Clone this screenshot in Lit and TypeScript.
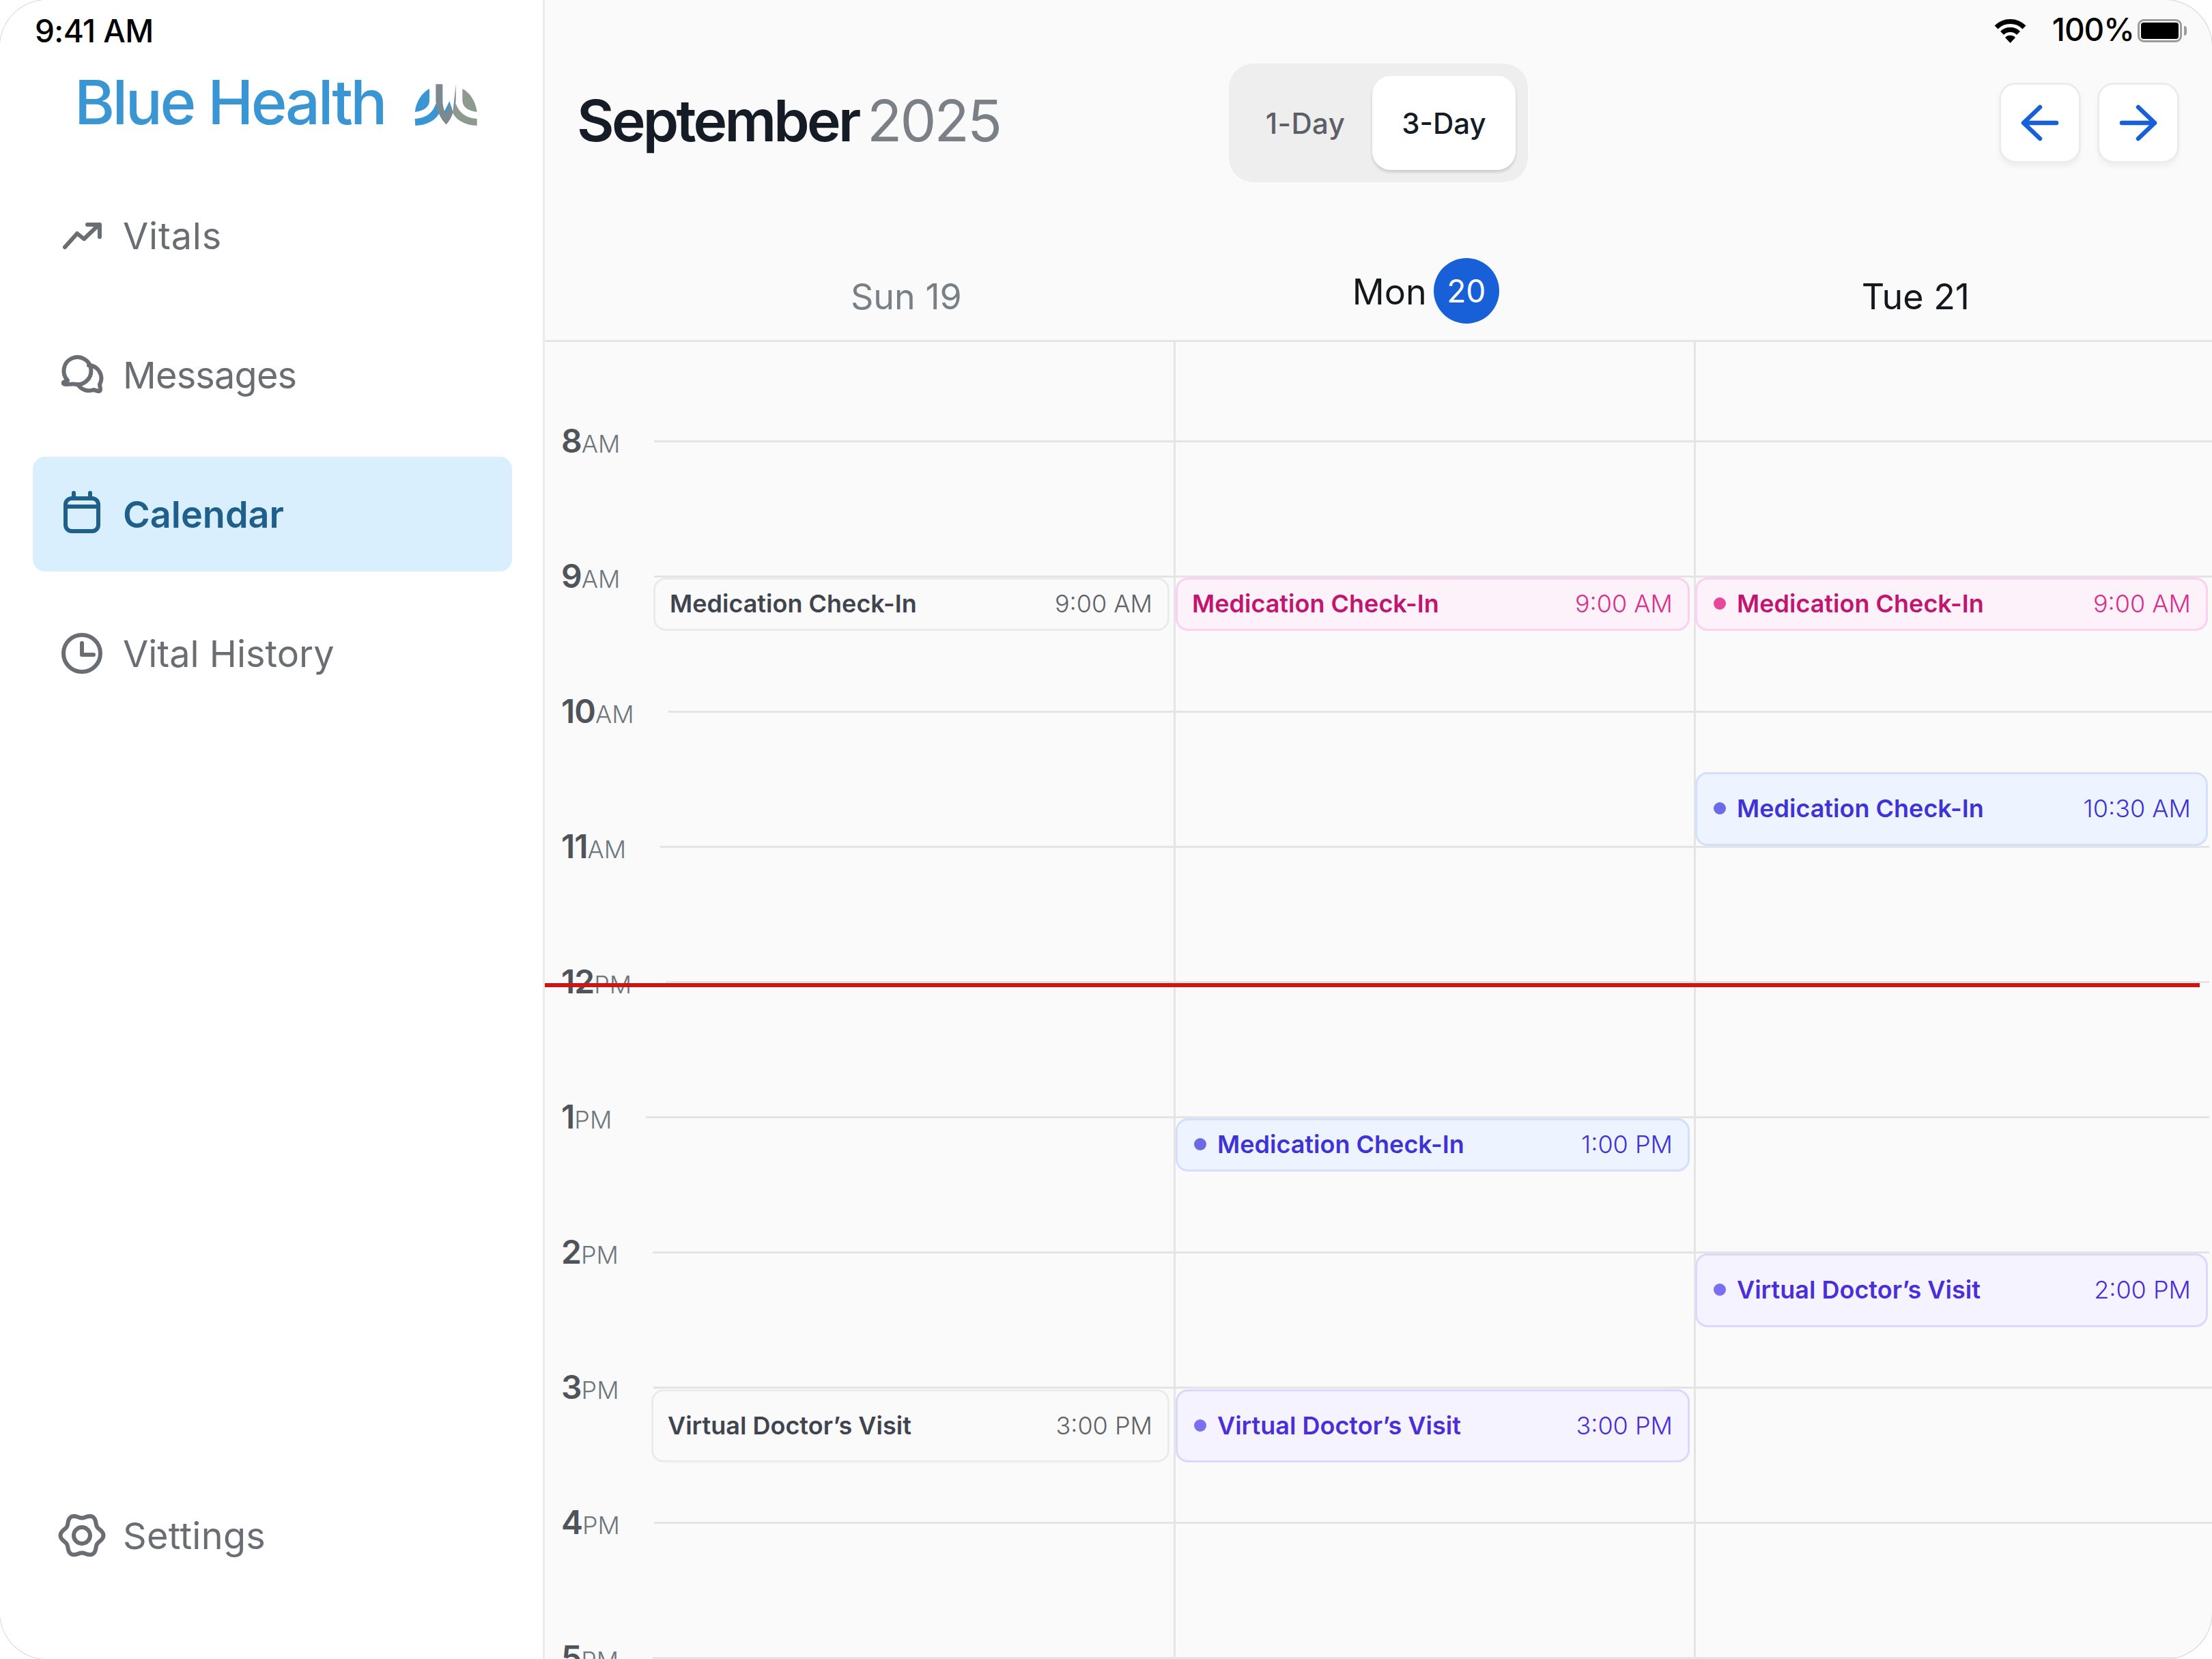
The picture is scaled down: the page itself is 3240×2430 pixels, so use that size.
import { LitElement, html, css, svg } from "lit";
import { customElement } from "lit/decorators.js";

const BODY_TOP = 501;
const BODY_LEFT = 798;

function gearPath(cx: number, cy: number, R: number, a: number): string {
  const pts: string[] = [];
  const n = 96;
  for (let i = 0; i < n; i++) {
    const t = (i / n) * Math.PI * 2;
    const r = R + a * Math.cos(6 * t);
    pts.push(`${(cx + r * Math.cos(t)).toFixed(2)} ${(cy + r * Math.sin(t)).toFixed(2)}`);
  }
  return "M" + pts.join("L") + "Z";
}

type Tone = "plain" | "pink" | "blue" | "violet";
interface Ev { x0: number; x1: number; y0: number; y1: number; tone: Tone; dot: boolean; title: string; time: string; }

const EVENTS: Ev[] = [
  { x0: 957, x1: 1713, y0: 846, y1: 924, tone: "plain", dot: false, title: "Medication Check-In", time: "9:00 AM" },
  { x0: 1722, x1: 2475, y0: 846, y1: 924, tone: "pink", dot: false, title: "Medication Check-In", time: "9:00 AM" },
  { x0: 2483, x1: 3234, y0: 846, y1: 924, tone: "pink", dot: true, title: "Medication Check-In", time: "9:00 AM" },
  { x0: 2483, x1: 3234, y0: 1131, y1: 1239, tone: "blue", dot: true, title: "Medication Check-In", time: "10:30 AM" },
  { x0: 1722, x1: 2475, y0: 1638, y1: 1716, tone: "blue", dot: true, title: "Medication Check-In", time: "1:00 PM" },
  { x0: 2483, x1: 3234, y0: 1836, y1: 1944, tone: "violet", dot: true, title: "Virtual Doctor’s Visit", time: "2:00 PM" },
  { x0: 954, x1: 1713, y0: 2035, y1: 2142, tone: "plain", dot: false, title: "Virtual Doctor’s Visit", time: "3:00 PM" },
  { x0: 1722, x1: 2475, y0: 2035, y1: 2142, tone: "violet", dot: true, title: "Virtual Doctor’s Visit", time: "3:00 PM" },
];

const HOURS: [string, string, boolean][] = [
  ["8", "AM", false], ["9", "AM", false], ["10", "AM", false], ["11", "AM", true], ["12", "PM", true],
  ["1", "PM", true], ["2", "PM", true], ["3", "PM", false], ["4", "PM", false], ["5", "PM", false],
];

const ICONS = {
  vitals: svg`<path d="M11 53 29 33 39 41 61 20"/><path d="M44 20H62V38"/>`,
  messages: svg`<path d="M15 44A20 20 0 1 1 24 49.4L12 50Q8 50 9 47Z"/><path d="M46 22A19 19 0 0 1 62 50L63 57Q63 60 60 60L53 58A19 19 0 0 1 30 50"/>`,
  calendar: svg`<rect x="12" y="13" width="48" height="48" rx="9"/><path d="M12 25H60M24 5V12M48 5V12"/>`,
  clock: svg`<circle cx="36" cy="36" r="27"/><path d="M36 21V38H53"/>`,
  settings: svg`<path d="${gearPath(36, 36, 28.5, 3)}"/><circle cx="36" cy="36" r="12"/>`,
};

@customElement("app-root")
export class AppRoot extends LitElement {
  static styles = css`
    :host { display: block; width: 3240px; height: 2430px; background: #fff; font-family: Inter, "Noto Sans", sans-serif; overflow: hidden; }
    .shell { width: 3240px; height: 2430px; display: flex; border-radius: 69px; overflow: hidden; background: #fafafa; box-shadow: 0 0 0 1px #d4d4d4; }
    .side { width: 795px; flex: none; background: #fff; border-right: 3px solid #ececec; display: flex; flex-direction: column; }
    .clock { height: 89px; padding-left: 51px; display: flex; align-items: center; font-size: 46px; font-weight: 500; color: #000; letter-spacing: -0.6px; }
    .logo { margin-top: 16px; height: 90px; padding-left: 109px; display: flex; align-items: center; font-size: 90px; line-height: 90px; font-weight: 500; color: #3a95d3; letter-spacing: -3.5px; white-space: nowrap; }
    .mark { width: 115px; height: 85px; flex: none; margin-left: 31px; margin-top: 5px; display: block; }
    .nav { margin-top: 66px; padding: 0 45px 0 48px; display: flex; flex-direction: column; gap: 36px; }
    .item { height: 168px; border-radius: 18px; padding-left: 36px; display: flex; align-items: center; gap: 24px; font-size: 54px; color: #6a6e73; }
    .item.wide { letter-spacing: 0.8px; }
    .item.tight { letter-spacing: -0.8px; }
    .item.tiny { letter-spacing: 0.3px; }
    .item svg { width: 72px; height: 72px; flex: none; fill: none; stroke: currentColor; stroke-width: 6; stroke-linecap: round; stroke-linejoin: round; }
    .item.on { background: #d9effd; color: #1f5f8c; font-weight: 600; }
    .bottom { margin-top: auto; padding: 0 45px 97px 48px; }
    .main { flex: 1; min-width: 0; display: flex; flex-direction: column; }
    .status { height: 93px; padding-right: 44px; display: flex; justify-content: flex-end; align-items: flex-start; padding-top: 24px; box-sizing: border-box; }
    .wifi { width: 47px; height: 36px; margin-top: 3px; }
    .pct { margin-left: 38px; margin-top: -2px; font-size: 46px; line-height: 42px; font-weight: 500; color: #000; letter-spacing: -1px; }
    .batt { margin-left: 5px; margin-top: 4px; width: 65px; height: 34px; box-sizing: border-box; border: 3px solid #9c9c9c; border-radius: 9px; padding: 2px; position: relative; }
    .batt i { display: block; height: 100%; background: #000; border-radius: 4px; }
    .batt::after { content: ""; position: absolute; left: 65px; top: 7px; width: 4px; height: 14px; background: #9c9c9c; border-radius: 0 4px 4px 0; }
    .bar { height: 174px; display: grid; grid-template-columns: 1002px 438px 1fr; align-items: center; }
    .title { padding: 0 0 7px 47px; font-size: 84px; font-weight: 600; color: #161c26; letter-spacing: -3.75px; word-spacing: -5px; white-space: nowrap; }
    .title span { font-weight: 400; color: #7a8085; letter-spacing: -2.8px; }
    .seg { height: 174px; box-sizing: border-box; background: #eeeeee; border-radius: 36px; padding: 18px; display: flex; align-items: stretch; justify-content: flex-end; }
    .seg div { display: flex; align-items: center; justify-content: center; font-size: 42px; font-weight: 500; }
    .seg .off { flex: 1; color: #5b5f67; padding-right: 4px; letter-spacing: 0.4px; }
    .seg .act { width: 210px; background: #fff; color: #141a26; border-radius: 27px; box-shadow: 0 3px 4px rgba(0,0,0,.16); }
    .btns { display: flex; justify-content: flex-end; gap: 24px; padding-right: 48px; }
    .btn { width: 120px; height: 118px; box-sizing: border-box; border: 3px solid #ececec; background: #fff; border-radius: 24px; box-shadow: 0 6px 6px rgba(0,0,0,.04); display: flex; align-items: center; justify-content: center; }
    .btn svg { width: 60px; height: 60px; fill: none; stroke: #1760d8; stroke-width: 6.5; stroke-linecap: round; stroke-linejoin: round; }
    .days { height: 234px; box-sizing: border-box; border-bottom: 3px solid #e5e5e5; padding: 0 0 24px 448px; display: flex; align-items: flex-end; font-size: 52px; line-height: 54px; white-space: nowrap; }
    .day { margin-bottom: 12px; }
    .day.sun { color: #787f85; }
    .day.tue { color: #14171c; margin-left: 531px; }
    .mon { margin-left: 572px; display: flex; align-items: center; color: #14171c; }
    .mon .name { margin-top: 3px; }
    .num { margin-left: 10px; width: 96px; height: 96px; border-radius: 50%; background: #1760d8; color: #fff; display: flex; align-items: center; justify-content: center; font-size: 46px; }
    .grid { flex: 1; min-height: 0; position: relative; overflow: hidden; padding: 46.5px 0 0 24px; }
    .row { height: 198px; display: flex; align-items: center; }
    .row.short { padding-right: 4px; }
    .lab { display: flex; align-items: baseline; margin-top: 3px; font-size: 48px; line-height: 48px; font-weight: 600; color: #4f545b; letter-spacing: -1px; font-kerning: none; }
    .lab span { font-size: 36px; font-weight: 300; color: #6f767c; letter-spacing: 0; }
    .rule { flex: 1; height: 3px; margin-left: 50px; background: #e4e4e4; }
    .vline { position: absolute; top: 0; bottom: 0; width: 3px; background: #e5e5e5; }
    .ev { position: absolute; box-sizing: border-box; border: 3px solid; border-radius: 18px; padding: 0 22px 2px 21px; display: flex; align-items: center; font-size: 36px; line-height: 44px; white-space: nowrap; }
    .ev.dotted { padding-left: 24px; }
    .ev b { font-weight: 600; }
    .ev em { font-style: normal; margin-left: auto; font-weight: 350; }
    .dot { width: 18px; height: 18px; border-radius: 50%; margin-right: 16px; flex: none; }
    .plain { background: #fafafa; border-color: #ebebeb; color: #3f444f; }
    .plain em { color: #5f6368; }
    .pink { background: #fdf1fa; border-color: #fcd0ee; color: #c2156f; }
    .pink em { color: #d9308c; }
    .pink .dot { background: #e8489c; }
    .blue { background: #edf3ff; border-color: #d3dffe; color: #3f33d6; }
    .blue .dot { background: #6d6ae8; }
    .violet { background: #f5f3ff; border-color: #d9d9fe; color: #4a2fd9; }
    .violet .dot { background: #7a6ff0; }
    .now { position: absolute; left: 0; top: 939px; width: 2424px; height: 6px; background: #cb1616; }
  `;

  private nav(icon: keyof typeof ICONS, label: string, cls = "") {
    return html`<div class="item ${cls}"><svg viewBox="0 0 72 72">${ICONS[icon]}</svg><span>${label}</span></div>`;
  }

  private event(e: Ev) {
    const pos = `left:${e.x0 - BODY_LEFT}px;top:${e.y0 - BODY_TOP}px;width:${e.x1 - e.x0}px;height:${e.y1 - e.y0}px`;
    return html`<div class="ev ${e.tone} ${e.dot ? "dotted" : ""}" style=${pos}>
      ${e.dot ? html`<i class="dot"></i>` : ""}<b>${e.title}</b><em>${e.time}</em>
    </div>`;
  }

  render() {
    return html`<div class="shell">
      <aside class="side">
        <div class="clock">9:41 AM</div>
        <div class="logo">Blue Health
          <svg class="mark" viewBox="0 0 345 255">
            <path fill="#3a95d3" d="M102 60C68 78 44 116 38 162 78 158 102 140 102 112Z"/>
            <path fill="#3a95d3" d="M38 192C88 188 118 165 130 125L146 165C130 200 90 220 40 222Z"/>
            <path fill="#3a95d3" d="M190 115 205 160 178 215 160 175Z"/>
            <path fill="#8f9a8f" d="M311 192C262 188 232 165 218 125L204 165C220 200 260 220 311 222Z"/>
            <path fill="#8f9a8f" d="M247 60C281 78 305 116 311 162 271 158 247 140 247 112Z"/>
            <path fill="#7b8a8f" d="M130 40H160V110C160 150 175 175 190 190L175 217C150 190 130 150 130 110Z"/>
            <path fill="#7b8a8f" d="M218 40H190V110C190 130 192 140 196 150L205 165C200 185 188 205 175 217L160 190C172 170 190 150 190 110V40H218V110C218 130 212 150 205 165Z"/>
          </svg>
        </div>
        <nav class="nav">
          ${this.nav("vitals", "Vitals", "wide")}
          ${this.nav("messages", "Messages", "tight")}
          ${this.nav("calendar", "Calendar", "on")}
          ${this.nav("clock", "Vital History")}
        </nav>
        <div class="bottom">${this.nav("settings", "Settings", "tiny")}</div>
      </aside>
      <main class="main">
        <div class="status">
          <svg class="wifi" viewBox="0 0 47 36">
            <path fill="none" stroke="#000" stroke-width="7" d="M3 13A29 29 0 0 1 44 13"/>
            <path fill="none" stroke="#000" stroke-width="7" d="M11.5 21.5A17 17 0 0 1 35.5 21.5"/>
            <path fill="#000" d="M16 28A10.5 10.5 0 0 1 31 28L23.5 36Z"/>
          </svg>
          <span class="pct">100%</span>
          <div class="batt"><i></i></div>
        </div>
        <div class="bar">
          <div class="title">September <span>2025</span></div>
          <div class="seg"><div class="off">1-Day</div><div class="act">3-Day</div></div>
          <div class="btns">
            <div class="btn"><svg viewBox="0 0 60 60"><path d="M54 30H6M30 7 6 30 30 53"/></svg></div>
            <div class="btn"><svg viewBox="0 0 60 60"><path d="M6 30H54M30 7 54 30 30 53"/></svg></div>
          </div>
        </div>
        <div class="days">
          <div class="day sun">Sun 19</div>
          <div class="mon"><span class="name">Mon</span><span class="num">20</span></div>
          <div class="day tue">Tue 21</div>
        </div>
        <div class="grid">
          ${HOURS.map(([h, m, short]) => html`<div class="row ${short ? "short" : ""}"><div class="lab">${h}<span>${m}</span></div><div class="rule"></div></div>`)}
          <div class="vline" style="left:${1719 - BODY_LEFT}px"></div>
          <div class="vline" style="left:${2481 - BODY_LEFT}px"></div>
          ${EVENTS.map((e) => this.event(e))}
          <div class="now"></div>
        </div>
      </main>
    </div>`;
  }
}
